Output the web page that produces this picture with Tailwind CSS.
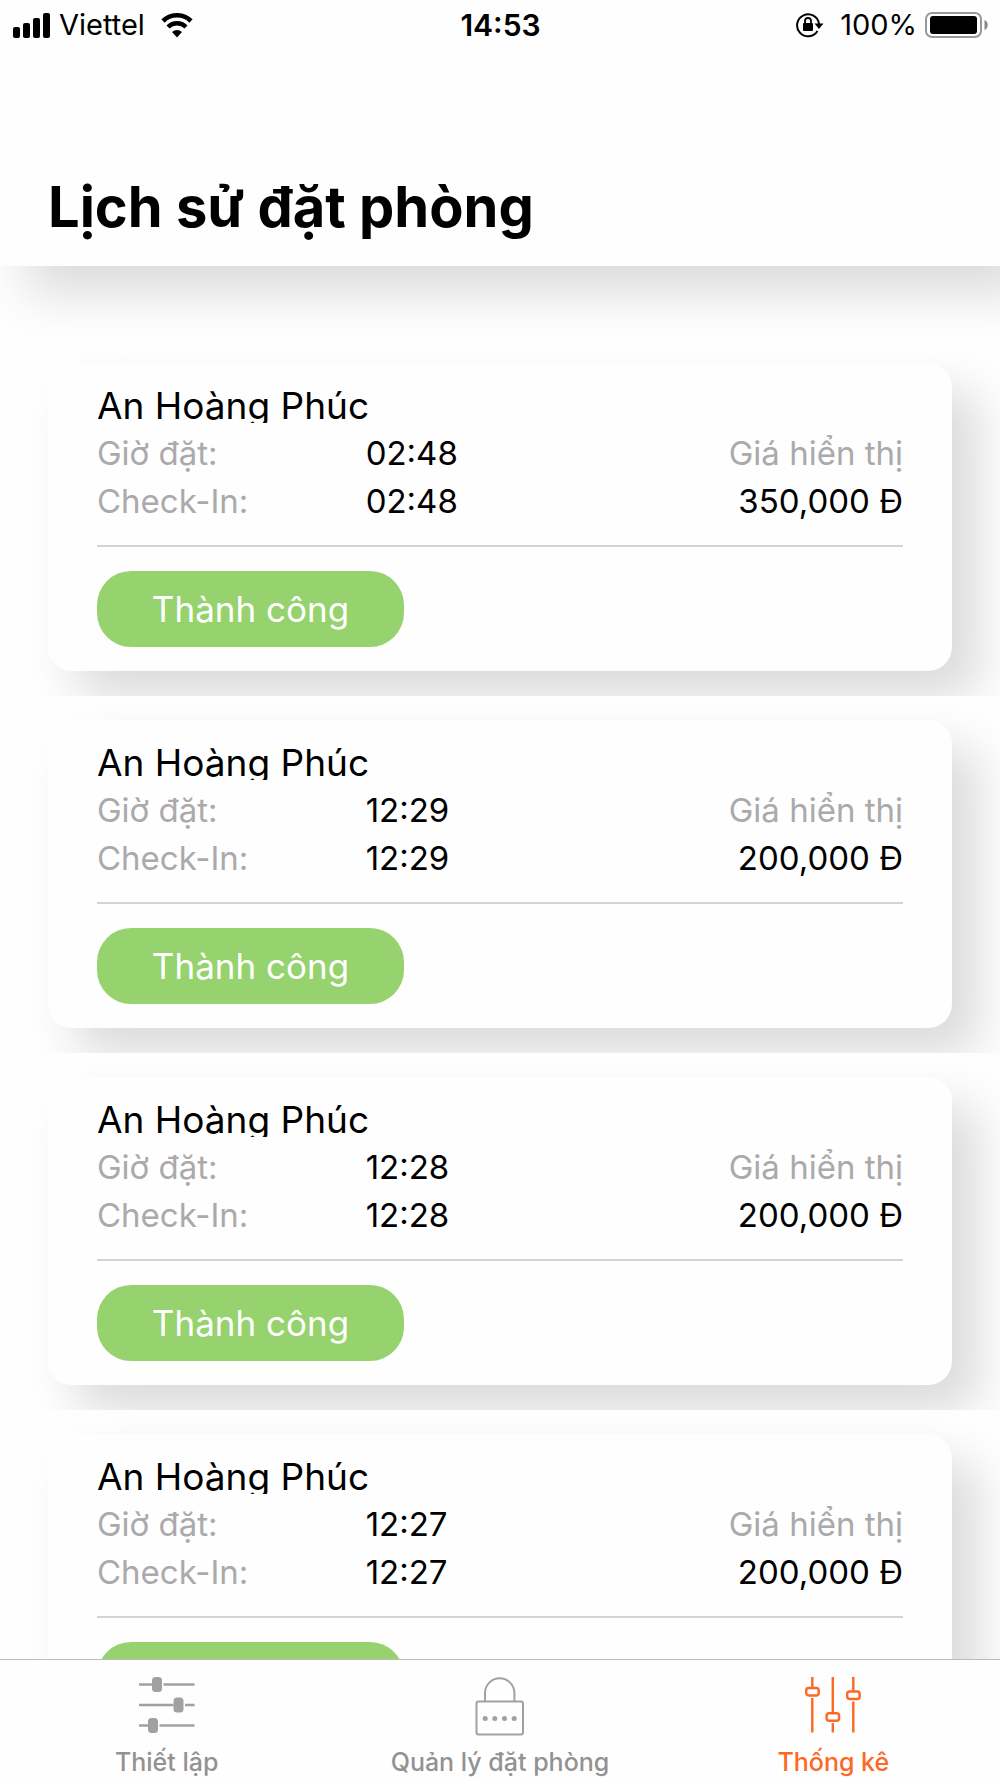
<!DOCTYPE html>
<html lang="vi">
<head>
    <meta charset="UTF-8">
    <meta name="viewport" content="width=device-width, initial-scale=1.0">
    <title>Lịch sử đặt phòng</title>
    <script src="https://cdn.jsdelivr.net/npm/@tailwindcss/browser@4"></script>
</head>
<body class="flex h-screen flex-col overflow-hidden bg-[#fefefe] font-['Inter','Liberation_Sans',sans-serif] text-black">

    <header class="shrink-0 bg-[#fefefe] shadow-[27px_27px_48px_rgba(0,0,0,0.14)]">
        <!-- Status bar -->
        <div class="grid h-[50px] grid-cols-[1fr_auto_1fr] items-center pr-3 pl-[13px] text-[29px]">
            <div class="flex items-center">
                <svg class="h-[25px] w-[38px]" viewBox="0 0 38 25" aria-hidden="true">
                    <rect x="0" y="14" width="7" height="11" rx="2"/>
                    <rect x="10" y="10" width="7" height="15" rx="2"/>
                    <rect x="20" y="5" width="7" height="20" rx="2"/>
                    <rect x="30" y="0" width="7" height="25" rx="2"/>
                </svg>
                <span class="ml-2">Viettel</span>
                <svg class="ml-4 h-[25px] w-8" viewBox="0 0 32 25" aria-hidden="true">
                    <path d="M2 8a20 20 0 0 1 28 0" fill="none" stroke="#000" stroke-width="4.600"/>
                    <path d="M7 14a12.800 12.800 0 0 1 18 0" fill="none" stroke="#000" stroke-width="4.400"/>
                    <path d="M11 19a7.500 7.500 0 0 1 10 0l-5 5.500z"/>
                </svg>
            </div>
            <time class="text-[30px] font-semibold">14:53</time>
            <div class="flex items-center justify-end">
                <svg class="h-[26px] w-7" viewBox="0 0 28 26" aria-label="Khóa xoay">
                    <path d="M23 12A11 11 0 1 0 21.500 19" fill="none" stroke="#000" stroke-width="2"/>
                    <path d="M18.500 11.500h9L23 17z"/>
                    <rect x="7" y="11" width="10" height="8" rx="1"/>
                    <path d="M9 11.500V9a3 3 0 0 1 6 0v2.500" fill="none" stroke="#000" stroke-width="1.800"/>
                </svg>
                <span class="ml-4">100%</span>
                <svg class="ml-2 h-[26px] w-[63px]" viewBox="0 0 63 26" aria-label="Pin đầy">
                    <rect x="1" y="1" width="55" height="24" rx="6" fill="none" stroke="#999" stroke-width="2"/>
                    <rect x="5" y="4" width="47" height="18" rx="3"/>
                    <path d="M59.500 8v10a5.500 5.500 0 0 0 0-10z" fill="#888"/>
                </svg>
            </div>
        </div>

        <h1 class="px-12 pt-[120px] pb-[22px] text-[56px] leading-[74px] font-bold">Lịch sử đặt phòng</h1>
    </header>

    <!-- Booking list -->
    <main class="min-h-0 flex-1 overflow-hidden pt-[73px]">
        <section class="h-[357px] overflow-hidden px-12 pt-6">
            <article class="rounded-3xl bg-[#fefefe] px-[49px] pt-6 pb-6 shadow-[27px_27px_48px_rgba(0,0,0,0.14)]">
                <h2 class="h-9 overflow-hidden text-[37px] leading-[38px]">An Hoàng Phúc</h2>
                <div class="mt-[6px] grid grid-cols-3 border-b-2 border-[#d3d3d3] pb-5 text-[33px] leading-12">
                    <span class="text-[#aaa]">Giờ đặt:</span>
                    <time>02:48</time>
                    <span class="text-right text-[#aaa]">Giá hiển thị</span>
                    <span class="text-[#aaa]">Check-In:</span>
                    <time>02:48</time>
                    <span class="text-right">350,000 Đ</span>
                </div>
                <button type="button" class="mt-6 flex h-[76px] w-[307px] items-center justify-center rounded-[34px] bg-[#96d36e] text-[35px] text-white">Thành công</button>
            </article>
        </section>

        <section class="h-[357px] overflow-hidden px-12 pt-6">
            <article class="rounded-3xl bg-[#fefefe] px-[49px] pt-6 pb-6 shadow-[27px_27px_48px_rgba(0,0,0,0.14)]">
                <h2 class="h-9 overflow-hidden text-[37px] leading-[38px]">An Hoàng Phúc</h2>
                <div class="mt-[6px] grid grid-cols-3 border-b-2 border-[#d3d3d3] pb-5 text-[33px] leading-12">
                    <span class="text-[#aaa]">Giờ đặt:</span>
                    <time>12:29</time>
                    <span class="text-right text-[#aaa]">Giá hiển thị</span>
                    <span class="text-[#aaa]">Check-In:</span>
                    <time>12:29</time>
                    <span class="text-right">200,000 Đ</span>
                </div>
                <button type="button" class="mt-6 flex h-[76px] w-[307px] items-center justify-center rounded-[34px] bg-[#96d36e] text-[35px] text-white">Thành công</button>
            </article>
        </section>

        <section class="h-[357px] overflow-hidden px-12 pt-6">
            <article class="rounded-3xl bg-[#fefefe] px-[49px] pt-6 pb-6 shadow-[27px_27px_48px_rgba(0,0,0,0.14)]">
                <h2 class="h-9 overflow-hidden text-[37px] leading-[38px]">An Hoàng Phúc</h2>
                <div class="mt-[6px] grid grid-cols-3 border-b-2 border-[#d3d3d3] pb-5 text-[33px] leading-12">
                    <span class="text-[#aaa]">Giờ đặt:</span>
                    <time>12:28</time>
                    <span class="text-right text-[#aaa]">Giá hiển thị</span>
                    <span class="text-[#aaa]">Check-In:</span>
                    <time>12:28</time>
                    <span class="text-right">200,000 Đ</span>
                </div>
                <button type="button" class="mt-6 flex h-[76px] w-[307px] items-center justify-center rounded-[34px] bg-[#96d36e] text-[35px] text-white">Thành công</button>
            </article>
        </section>

        <section class="h-[357px] overflow-hidden px-12 pt-6">
            <article class="rounded-3xl bg-[#fefefe] px-[49px] pt-6 pb-6 shadow-[27px_27px_48px_rgba(0,0,0,0.14)]">
                <h2 class="h-9 overflow-hidden text-[37px] leading-[38px]">An Hoàng Phúc</h2>
                <div class="mt-[6px] grid grid-cols-3 border-b-2 border-[#d3d3d3] pb-5 text-[33px] leading-12">
                    <span class="text-[#aaa]">Giờ đặt:</span>
                    <time>12:27</time>
                    <span class="text-right text-[#aaa]">Giá hiển thị</span>
                    <span class="text-[#aaa]">Check-In:</span>
                    <time>12:27</time>
                    <span class="text-right">200,000 Đ</span>
                </div>
                <button type="button" class="mt-6 flex h-[76px] w-[307px] items-center justify-center rounded-[34px] bg-[#96d36e] text-[35px] text-white">Thành công</button>
            </article>
        </section>
    </main>

    <!-- Tab bar -->
    <nav class="grid h-[119px] shrink-0 grid-cols-3 border-t border-[#bbb] bg-[#fefefe] text-[25px] leading-7 font-medium text-[#929292]">
        <a href="#" class="flex flex-col items-center gap-3 pt-4">
            <svg class="h-[60px] w-[60px]" viewBox="0 0 60 60" aria-hidden="true" fill="#a1a1a1">
                <path d="M2 7.200h13v2.600H2zM26.500 7.200H57.500v2.600h-31zM2 27.700h34.500v2.600H2zM48 27.700h9.500v2.600H48zM2 48.200h9v2.600H2zM22.500 48.200h35v2.600h-35z"/>
                <rect x="15" y="1" width="10" height="15" rx="3.500"/>
                <rect x="36.500" y="21.500" width="10" height="15" rx="3.500"/>
                <rect x="11" y="42" width="10" height="15" rx="3.500"/>
            </svg>
            Thiết lập
        </a>
        <a href="#" class="flex flex-col items-center gap-3 pt-4">
            <svg class="h-[60px] w-[60px]" viewBox="0 0 60 60" aria-hidden="true" fill="none" stroke="#a1a1a1" stroke-width="2">
                <rect x="6.500" y="25.500" width="46.500" height="33" rx="2"/>
                <path d="M15 25.500V17a14.700 14.700 0 0 1 29.400 0v8.500"/>
                <g fill="#a1a1a1" stroke="none">
                    <circle cx="15.200" cy="42.500" r="2.500"/>
                    <circle cx="24.800" cy="42.500" r="2.500"/>
                    <circle cx="34.500" cy="42.500" r="2.500"/>
                    <circle cx="44.200" cy="42.500" r="2.500"/>
                </g>
            </svg>
            Quản lý đặt phòng
        </a>
        <a href="#" class="flex flex-col items-center gap-3 pt-4 text-[#fd6825]" aria-current="page">
            <svg class="h-[60px] w-[60px]" viewBox="0 0 60 60" aria-hidden="true" fill="none" stroke="currentColor" stroke-width="2.400">
                <path d="M9.300 1v10.500M9.300 22v34.500M29.800 1v36M29.800 47v9.500M50.300 1v14M50.300 25.500v31"/>
                <rect x="3.200" y="12" width="12.500" height="7.500" rx="2.500"/>
                <rect x="23.600" y="37.200" width="12.500" height="7.500" rx="2.500"/>
                <rect x="44.200" y="15.500" width="12.500" height="7.500" rx="2.500"/>
            </svg>
            Thống kê
        </a>
    </nav>

</body>
</html>
